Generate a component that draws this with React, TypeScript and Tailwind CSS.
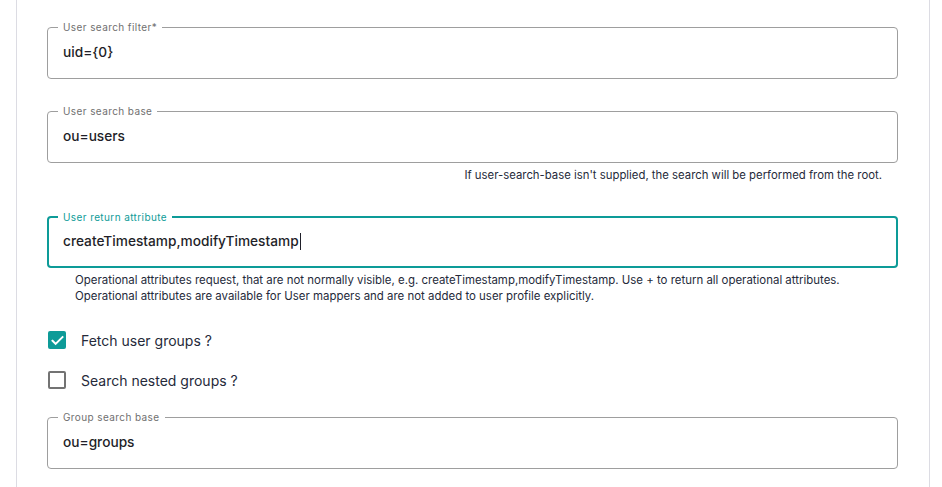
import React, { useState } from 'react';

interface OutlinedFieldProps {
  label: string;
  value: string;
  focused?: boolean;
}

const OutlinedField: React.FC<OutlinedFieldProps> = ({ label, value, focused }) => {
  return (
    <div
      className={`relative flex h-[52px] items-center rounded-[4px] pb-[2px] ${
        focused ? 'border-2 border-[#0d9b98] pl-[14px]' : 'border border-[#9e9e9e] pl-[15px]'
      }`}
    >
      <span
        className={`absolute bg-white px-[5px] text-[10px] leading-[12px] tracking-[0.4px] ${
          focused ? '-top-[7px] left-[9px] text-[#0d9b98]' : '-top-[7px] left-[10px] text-[#707070]'
        }`}
      >
        {label}
      </span>
      <span className="text-[13.7px] font-medium text-[#1f1f29]">{value}</span>
      {focused && <span className="ml-px h-[17px] w-px bg-[#1f1f29]" />}
    </div>
  );
};

const Checkbox: React.FC<{ checked: boolean; label: string; onToggle: () => void }> = ({
  checked,
  label,
  onToggle,
}) => (
  <label className="flex h-[18px] cursor-pointer items-center gap-[15px]" onClick={onToggle}>
    {checked ? (
      <span className="flex h-[18px] w-[18px] items-center justify-center rounded-[2px] bg-[#0d9b98]">
        <svg width="15" height="15" viewBox="0 0 24 24" fill="none">
          <path d="M4 12.5l5 5L20 6.5" stroke="white" strokeWidth="3.2" strokeLinecap="square" />
        </svg>
      </span>
    ) : (
      <span className="h-[18px] w-[18px] rounded-[2px] border-2 border-[#737373]" />
    )}
    <span className="text-[14px] text-[#252a3a]">{label}</span>
  </label>
);

export default function App() {
  const [fetchGroups, setFetchGroups] = useState(true);
  const [nested, setNested] = useState(false);

  return (
    <div
      className="h-[487px] overflow-hidden bg-white pl-[16px] pr-[12px]"
      style={{ fontFamily: 'Inter, "Noto Sans", sans-serif' }}
    >
      <div className="h-full border-x border-[#dcdce3] pl-[30px] pr-[31px] pt-[27px]">
        <OutlinedField label="User search filter*" value="uid={0}" />

        <div className="mt-[32px]">
          <OutlinedField label="User search base" value="ou=users" />
          <p className="mt-[4px] pr-[16px] text-right text-[11.35px] leading-[16px] text-[#252a3a]">
            If user-search-base isn't supplied, the search will be performed from the root.
          </p>
        </div>

        <div className="mt-[33px]">
          <OutlinedField label="User return attribute" value="createTimestamp,modifyTimestamp" focused />
          <p className="mt-[4px] pl-[28px] text-[11.45px] leading-[16px] text-[#252a3a]">
            Operational attributes request, that are not normally visible, e.g. createTimestamp,modifyTimestamp. Use + to return all operational attributes.
            <br />
            Operational attributes are available for User mappers and are not added to user profile explicitly.
          </p>
        </div>

        <div className="mt-[27px] flex flex-col gap-[22px] pl-px">
          <Checkbox checked={fetchGroups} label="Fetch user groups ?" onToggle={() => setFetchGroups(!fetchGroups)} />
          <Checkbox checked={nested} label="Search nested groups ?" onToggle={() => setNested(!nested)} />
        </div>

        <div className="mt-[28px]">
          <OutlinedField label="Group search base" value="ou=groups" />
        </div>
      </div>
    </div>
  );
}
